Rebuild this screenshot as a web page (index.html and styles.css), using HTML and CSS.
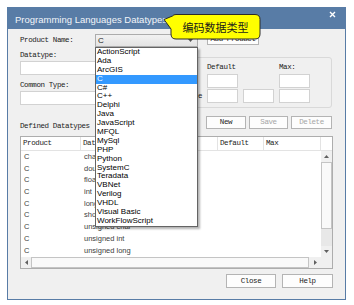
FILE: index.html
```html
<!DOCTYPE html>
<html>
	<head>
		<meta charset="utf-8" />
		<title>Programming Languages Datatypes</title>
		<link rel="stylesheet" href="styles.css">
	</head>
	<body>
		<div class="dialog">
			<div class="titlebar">
				<span class="title">Programming Languages Datatypes</span>
				<svg class="close-x" width="7" height="7" viewBox="0 0 7 7"><path d="M1 1L6 6M6 1L1 6" stroke="#fff" stroke-width="1.4"/></svg>
			</div>
			<div class="dlg-body">
				<div class="row-product">
					<span class="lbl lbl-product">Product Name:</span>
					<div class="combo">
						<span class="combo-value">C</span>
						<span class="combo-btn"><svg width="5" height="3" viewBox="0 0 5 3"><path d="M0 0H5L2.5 3Z" fill="#555"/></svg></span>
						<ul class="dropdown">
							<li>ActionScript</li>
							<li>Ada</li>
							<li>ArcGIS</li>
							<li class="selected">C</li>
							<li>C#</li>
							<li>C++</li>
							<li>Delphi</li>
							<li>Java</li>
							<li>JavaScript</li>
							<li>MFQL</li>
							<li>MySql</li>
							<li>PHP</li>
							<li>Python</li>
							<li>SystemC</li>
							<li>Teradata</li>
							<li>VBNet</li>
							<li>Verilog</li>
							<li>VHDL</li>
							<li>Visual Basic</li>
							<li>WorkFlowScript</li>
						</ul>
					</div>
					<div class="btn btn-add">Add Product</div>
				</div>

				<div class="fields">
					<div class="left-col">
						<div class="lbl">Datatype:</div>
						<div class="input"></div>
						<div class="lbl lbl-gap">Common Type:</div>
						<div class="input"></div>
					</div>
					<div class="group">
						<div class="group-grid">
							<span></span>
							<span class="lbl">Default</span>
							<span></span>
							<span class="lbl">Max:</span>

							<span></span>
							<div class="input box"></div>
							<span></span>
							<div class="input box"></div>

							<span class="lbl lbl-right">Scale</span>
							<div class="input box"></div>
							<div class="input box"></div>
							<div class="input box"></div>
						</div>
					</div>
				</div>

				<div class="actions">
					<span class="lbl lbl-defined">Defined Datatypes</span>
					<div class="btn-group">
						<div class="btn btn-new">New</div>
						<div class="btn btn-save disabled">Save</div>
						<div class="btn btn-delete disabled">Delete</div>
					</div>
				</div>

				<div class="listview">
					<div class="lv-header">
						<div class="hcell h-product">Product</div>
						<div class="hcell h-type">Datatype</div>
						<div class="hcell h-default">Default</div>
						<div class="hcell h-max">Max</div>
						<div class="hcell h-fill"></div>
					</div>
					<div class="lv-rows">
						<div class="lv-row"><span class="c-product">C</span><span>char</span></div>
						<div class="lv-row"><span class="c-product">C</span><span>double</span></div>
						<div class="lv-row"><span class="c-product">C</span><span>float</span></div>
						<div class="lv-row"><span class="c-product">C</span><span>int</span></div>
						<div class="lv-row"><span class="c-product">C</span><span>long</span></div>
						<div class="lv-row"><span class="c-product">C</span><span>short</span></div>
						<div class="lv-row"><span class="c-product">C</span><span>unsigned char</span></div>
						<div class="lv-row"><span class="c-product">C</span><span>unsigned int</span></div>
						<div class="lv-row"><span class="c-product">C</span><span>unsigned long</span></div>
					</div>
					<div class="vscroll">
						<div class="sb-btn"><svg width="5" height="3" viewBox="0 0 5 3"><path d="M0 3H5L2.5 0Z" fill="#606060"/></svg></div>
						<div class="sb-thumb-v"></div>
						<div class="sb-track"></div>
						<div class="sb-btn"><svg width="5" height="3" viewBox="0 0 5 3"><path d="M0 0H5L2.5 3Z" fill="#606060"/></svg></div>
					</div>
					<div class="hscroll">
						<div class="sb-btn sb-left"><svg width="3" height="5" viewBox="0 0 3 5"><path d="M3 0V5L0 2.5Z" fill="#606060"/></svg></div>
						<div class="sb-thumb-h"></div>
						<div class="sb-btn sb-right"><svg width="3" height="5" viewBox="0 0 3 5"><path d="M0 0V5L3 2.5Z" fill="#606060"/></svg></div>
					</div>
					<div class="sb-corner"></div>
				</div>

				<div class="footer">
					<div class="btn btn-close">Close</div>
					<div class="btn btn-help">Help</div>
				</div>
			</div>
		</div>

		<div class="callout">
			<svg class="callout-shape" width="104" height="33" viewBox="0 0 104 33">
				<path d="M16 4.5H95Q100 4.5 100 9.5V24Q100 29 95 29H16Q11 29 11 24V19L4 9.5L12.5 6Q13.5 4.5 16 4.5Z" fill="#ffff00" stroke="#2a2a2a" stroke-width="1"/>
			</svg>
			<span class="callout-text">编码数据类型</span>
		</div>
	</body>
</html>
```

FILE: styles.css
```css
*{
	margin: 0;
	padding: 0;
	box-sizing: border-box;
}
body{
	position: relative;
	width: 354px;
	height: 305px;
	overflow: hidden;
	background: #fff;
	font-family: "Liberation Mono", monospace;
	color: #1c1c1c;
}
.dialog{
	margin: 7px 0 0 7px;
	width: 339px;
	height: 293px;
	border: 1px solid #587ca6;
	background: #f0f0f0;
	display: flex;
	flex-direction: column;
}
.titlebar{
	height: 21px;
	background: #587ca6;
	display: flex;
	align-items: flex-start;
	justify-content: space-between;
	padding: 0 9px 0 7px;
}
.title{
	font-family: "Liberation Sans", sans-serif;
	font-size: 9.5px;
	line-height: 12px;
	margin-top: 6px;
	color: #f2f5f9;
}
.close-x{
	margin-top: 3px;
}
.dlg-body{
	flex: 1;
	padding: 4px 12px 0;
}

/* labels */
.lbl{
	font-size: 7.5px;
	letter-spacing: -0.4px;
	line-height: 10px;
	white-space: nowrap;
}
.lbl-product{
	width: 75px;
	line-height: 14px;
}
.lbl-gap{
	margin-top: 5px;
}
.lbl-right{
	text-align: right;
	line-height: 14px;
}

/* product row */
.row-product{
	display: flex;
	align-items: flex-start;
	height: 14px;
}
.combo{
	position: relative;
	width: 103px;
	height: 13px;
	margin-top: 1px;
	border: 1px solid #acacac;
	background: linear-gradient(#f2f2f2, #e3e3e3);
	display: flex;
	align-items: center;
}
.combo-value{
	font-family: "Liberation Sans", sans-serif;
	font-size: 8px;
	padding-left: 2px;
}
.combo-btn{
	margin-left: auto;
	width: 14px;
	display: flex;
	justify-content: center;
}
.dropdown{
	position: absolute;
	left: -1px;
	top: 12px;
	width: 103px;
	border: 1px solid #646464;
	background: #fff;
	list-style: none;
	z-index: 5;
	box-shadow: 2px 2px 2px rgba(0,0,0,0.3);
}
.dropdown li{
	font-family: "Liberation Sans", sans-serif;
	font-size: 8px;
	line-height: 8.9px;
	height: 8.9px;
	padding-left: 1px;
	color: #000;
	white-space: nowrap;
}
.dropdown li.selected{
	background: #3399ff;
	color: #fff;
}

/* buttons */
.btn{
	height: 13px;
	border: 1px solid #b4b4b4;
	background: #fdfdfd;
	font-size: 7.5px;
	letter-spacing: -0.4px;
	line-height: 11px;
	text-align: center;
	white-space: nowrap;
	overflow: hidden;
}
.btn.disabled{
	color: #a6a6a6;
}
.btn-add{
	width: 52px;
	height: 11px;
	line-height: 9px;
	margin: 1px 0 0 9px;
}

/* fields */
.fields{
	display: grid;
	grid-template-columns: 125px 182px;
	column-gap: 5px;
	margin-top: 3px;
}
.input{
	height: 14px;
	margin-top: 1px;
	border: 1px solid #d2d2d2;
	background: #fff;
}
.group{
	margin-top: 7px;
	height: 51px;
	border: 1px solid #d9d9d9;
	border-radius: 3px;
	padding-top: 5px;
}
.group-grid{
	display: grid;
	grid-template-columns: 51px 31px 31px 31px;
	grid-template-rows: 11px 15px 14px;
	column-gap: 5px;
}
.group-grid .lbl{
	line-height: 8px;
}
.group-grid .lbl-right{
	line-height: 14px;
}
.input.box{
	margin-top: 0;
	height: 14px;
}

/* actions */
.actions{
	display: flex;
	justify-content: space-between;
	align-items: flex-start;
	margin-top: 8px;
}
.lbl-defined{
	margin-top: 6px;
	line-height: 8px;
}
.btn-group{
	display: flex;
	gap: 3px;
	margin-right: 1px;
}
.btn-new{ width: 40px; }
.btn-save{ width: 39px; }
.btn-delete{ width: 41px; }

/* list view */
.listview{
	margin-top: 6px;
	height: 133px;
	border: 1px solid #adadad;
	background: #fff;
	display: grid;
	grid-template-columns: 1fr 11px;
	grid-template-rows: 14px 1fr 11px;
}
.lv-header{
	grid-column: 1 / -1;
	display: flex;
	border-bottom: 1px solid #e3e3e3;
}
.hcell{
	border-right: 1px solid #e3e3e3;
	font-size: 7.5px;
	letter-spacing: -0.4px;
	line-height: 13px;
	padding-left: 2px;
	white-space: nowrap;
	overflow: hidden;
}
.h-product{ width: 60px; }
.h-type{ width: 137px; }
.h-default{ width: 46px; }
.h-max{ width: 57px; }
.h-fill{ flex: 1; border-right: 0; }
.lv-rows{
	overflow: hidden;
}
.lv-row{
	display: flex;
	height: 11.7px;
	font-family: "Liberation Sans", sans-serif;
	font-size: 7.5px;
	line-height: 11.7px;
	color: #404040;
	padding-left: 3px;
	white-space: nowrap;
}
.c-product{
	width: 60px;
}
.vscroll{
	display: flex;
	flex-direction: column;
	background: #e8e8e8;
}
.sb-btn{
	height: 11px;
	background: #f0f0f0;
	display: flex;
	align-items: center;
	justify-content: center;
}
.sb-thumb-v{
	height: 67px;
	border: 1px solid #c4c4c4;
	background: #f9f9f9;
}
.sb-track{
	flex: 1;
}
.hscroll{
	display: flex;
	background: #e8e8e8;
}
.sb-left{
	width: 10px;
	height: 11px;
}
.sb-right{
	width: 12px;
	height: 11px;
}
.sb-thumb-h{
	flex: 1;
	border: 1px solid #c4c4c4;
	background: #f9f9f9;
}
.sb-corner{
	background: #f0f0f0;
}

/* footer */
.footer{
	display: flex;
	justify-content: flex-end;
	gap: 6px;
	margin-top: 5px;
}
.btn-close{
	width: 50px;
	height: 14px;
	line-height: 12px;
}
.btn-help{
	width: 51px;
	height: 14px;
	line-height: 12px;
}

/* annotation callout */
.callout{
	position: absolute;
	left: 160px;
	top: 10px;
	width: 104px;
	height: 33px;
	z-index: 10;
}
.callout-shape{
	position: absolute;
	left: 0;
	top: 0;
}
.callout-text{
	position: absolute;
	left: 11px;
	top: 4px;
	width: 89px;
	height: 25px;
	display: flex;
	align-items: center;
	justify-content: center;
	font-family: "Noto Sans CJK SC", sans-serif;
	font-size: 11px;
	color: #1a1a1a;
}
```
